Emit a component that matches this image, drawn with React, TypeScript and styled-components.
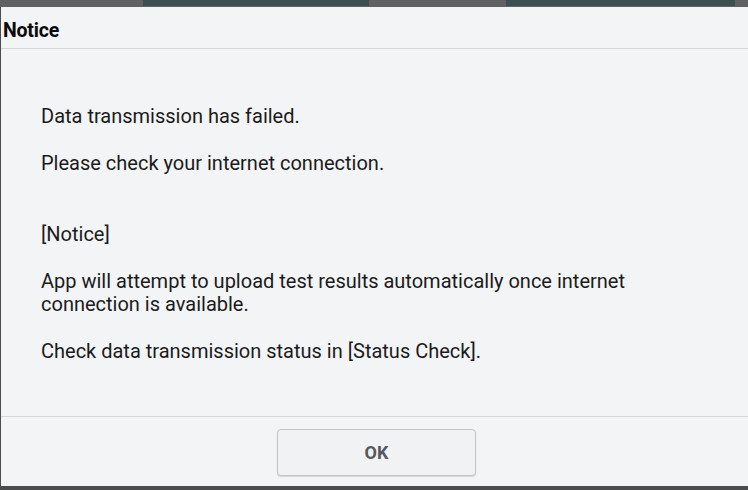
import React from "react";
import styled, { createGlobalStyle } from "styled-components";

const Global = createGlobalStyle`
  html, body { margin: 0; padding: 0; }
  body { background: #5f6162; font-family: Roboto, "Noto Sans", sans-serif; }
`;

const Page = styled.div`
  width: 748px;
  height: 490px;
  display: flex;
  flex-direction: column;
  background: #5f6162;
  overflow: hidden;
`;

const TopStrip = styled.div`
  height: 7px;
  flex: none;
  display: flex;
  align-items: flex-start;
`;

const Tab = styled.div<{ $left: number; $width: number }>`
  margin-left: ${(p) => p.$left}px;
  width: ${(p) => p.$width}px;
  height: 6px;
  background: #3d4f50;
`;

const Dialog = styled.div`
  flex: none;
  height: 479px;
  display: flex;
  flex-direction: column;
  background: #f3f4f6;
  border-left: 1px solid #4a4c4d;
  box-sizing: border-box;
`;

const Header = styled.div`
  height: 42px;
  flex: none;
  box-sizing: border-box;
  border-bottom: 1px solid #d6d7d9;
  display: flex;
  align-items: center;
  padding: 5px 0 0 2px;
  font-size: 19.5px;
  font-weight: 700;
  letter-spacing: -0.2px;
  color: #0a0a0a;
`;

const Body = styled.div`
  flex: 1;
  padding: 56px 40px 0 40px;
  color: #1b1b1b;
  font-size: 20px;
  line-height: 23px;
`;

const Para = styled.p<{ $gap?: number }>`
  margin: 0 0 ${(p) => p.$gap ?? 24}px 0;
  max-width: 640px;
`;

const Footer = styled.div`
  height: 70px;
  flex: none;
  box-sizing: border-box;
  border-top: 1px solid #d6d7d9;
  display: flex;
  justify-content: center;
  align-items: flex-start;
  padding-top: 12px;
  padding-left: 4px;
`;

const Button = styled.button`
  width: 199px;
  height: 47px;
  border: 1px solid #c3c4c6;
  border-radius: 4px;
  background: #f1f2f4;
  box-shadow: 0 1px 1px rgba(0, 0, 0, 0.12);
  font-family: Roboto, "Noto Sans", sans-serif;
  font-size: 18px;
  font-weight: 700;
  color: #55595f;
  cursor: pointer;
`;

const BottomStrip = styled.div`
  flex: 1;
  background: #4a4c4d;
`;

export default function App() {
  return (
    <>
      <Global />
      <Page>
        <TopStrip>
          <Tab $left={143} $width={226} />
          <Tab $left={137} $width={229} />
        </TopStrip>
        <Dialog>
          <Header>Notice</Header>
          <Body>
            <Para>Data transmission has failed.</Para>
            <Para $gap={48}>Please check your internet connection.</Para>
            <Para>[Notice]</Para>
            <Para>
              App will attempt to upload test results automatically once internet connection is available.
            </Para>
            <Para>Check data transmission status in [Status Check].</Para>
          </Body>
          <Footer>
            <Button>OK</Button>
          </Footer>
        </Dialog>
        <BottomStrip />
      </Page>
    </>
  );
}
